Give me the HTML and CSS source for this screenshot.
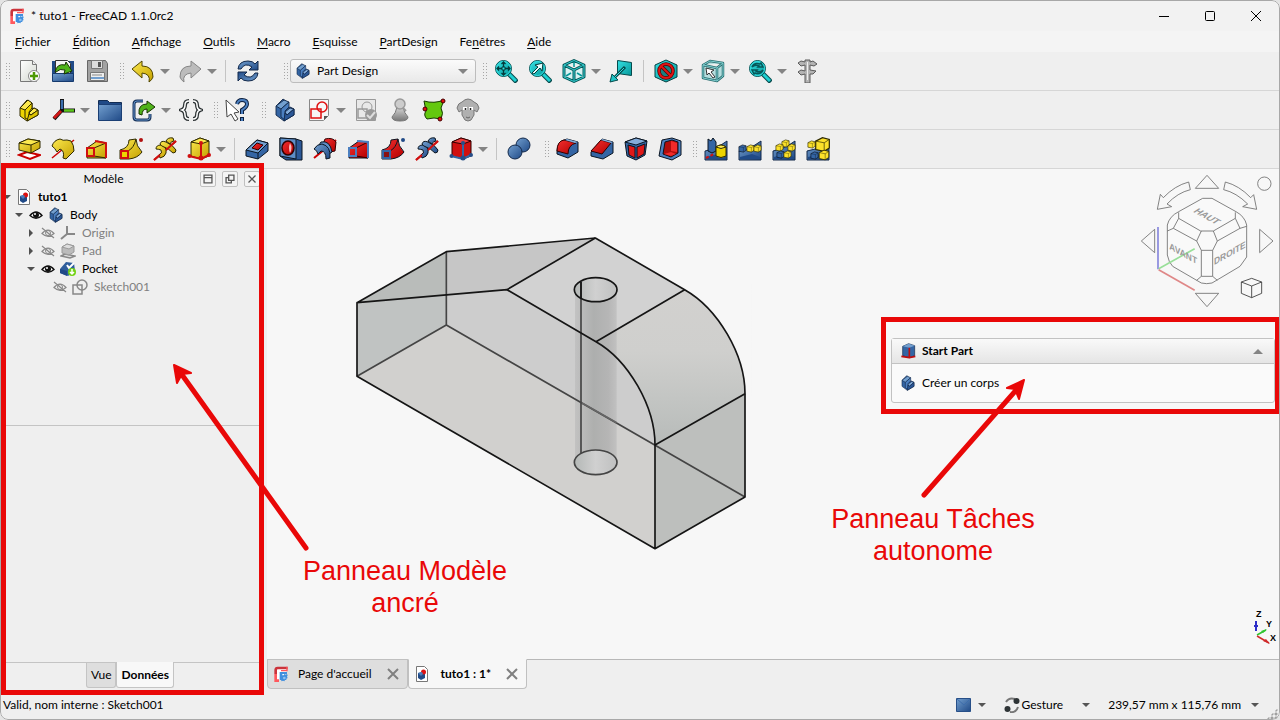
FILE: index.html
```html
<!DOCTYPE html>
<html lang="fr">
<head>
    <meta charset="UTF-8">
    <meta name="viewport" content="width=device-width, initial-scale=1.0">
    <title>* tuto1 - FreeCAD 1.1.0rc2</title>
    <link rel="stylesheet" href="styles.css">
</head>
<body>
    <!-- shared icons -->
    <svg class="defs" width="0" height="0">
        <defs>
            <linearGradient id="gb" x1="0" y1="0" x2="1" y2="1"><stop offset="0" stop-color="#729fcf"/><stop offset="1" stop-color="#204a87"/></linearGradient>
            <linearGradient id="gy" x1="0" y1="0" x2="1" y2="1"><stop offset="0" stop-color="#fce94f"/><stop offset="1" stop-color="#c4a000"/></linearGradient>
            <linearGradient id="gr" x1="0" y1="0" x2="1" y2="1"><stop offset="0" stop-color="#f23030"/><stop offset="1" stop-color="#b40000"/></linearGradient>
            <linearGradient id="gt" x1="0" y1="0" x2="1" y2="1"><stop offset="0" stop-color="#34e0e2"/><stop offset="1" stop-color="#06989a"/></linearGradient>
            <linearGradient id="gg" x1="0" y1="0" x2="0" y2="1"><stop offset="0" stop-color="#d8d8d8"/><stop offset="1" stop-color="#777"/></linearGradient>
            <linearGradient id="gp" x1="0" y1="0" x2="1" y2="1"><stop offset="0" stop-color="#fff"/><stop offset="1" stop-color="#d3d7cf"/></linearGradient>
            <linearGradient id="gf" x1="0" y1="0" x2="0" y2="1"><stop offset="0" stop-color="#d2d1cf"/><stop offset="0.4" stop-color="#cfcfcd"/><stop offset="1" stop-color="#b7bbb9"/></linearGradient>
            <linearGradient id="gc" x1="0" y1="0" x2="1" y2="0"><stop offset="0" stop-color="#bcbcbc"/><stop offset="0.45" stop-color="#9fa1a0"/><stop offset="0.8" stop-color="#aaa"/><stop offset="1" stop-color="#bbb"/></linearGradient>
            <linearGradient id="gh" x1="0" y1="0" x2="1" y2="0"><stop offset="0" stop-color="#b4b8b6"/><stop offset="0.5" stop-color="#d0d0d0"/><stop offset="1" stop-color="#bfc0c0"/></linearGradient>
        </defs>
        <symbol id="body" viewBox="0 0 24 24">
            <g stroke="#12284a" stroke-width=".9" stroke-linejoin="round">
                <path fill="#3465a4" d="M3 8v9l8 6 10-6v-6l-4-2-3 2V4l-4-3z"/>
                <path fill="#729fcf" d="M3 8l8-6 5 2-8 7z"/>
                <path fill="#4b7fc0" d="M8 11l8-7v5l-4 4v9l-4-3z"/>
                <path fill="#84addb" d="M12 14l5-4 4 1-7 6z"/>
                <path fill="#2b5796" d="M12 15l2 2 7-6v6l-10 6z"/>
            </g>
        </symbol>
        <symbol id="ybody" viewBox="0 0 24 24">
            <g stroke="#302b00" stroke-linejoin="round">
                <path fill="#edd400" d="M3 10v8l7 5 11-6v-5l-4-2-2 1V5l-5-3z"/>
                <path fill="#fce94f" d="M3 10l8-8 4 3-7 7z"/>
                <path fill="#edd400" d="M8 12l7-7v5l-3 4v8l-4-2z"/>
                <path fill="#fce94f" d="M12 15l5-5 4 2-7 5z"/>
                <path fill="#dcc300" d="M12 16l2 1 7-5v5l-11 6z"/>
            </g>
        </symbol>
        <symbol id="logo" viewBox="0 0 24 24">
            <path fill="#fff" d="M5 4h15v6l-3 3-3 8H5z"/>
            <path fill="none" stroke="#cb333b" stroke-width="4" d="M4 12V6q0-3 3-3h15"/>
            <path fill="none" stroke="#ff585d" stroke-width="4" d="M4 12v10h5"/>
            <path fill="none" stroke="#ff585d" stroke-width="2" d="M21 1v6h-9"/>
            <path fill="#418fde" d="M10 9h11v3h-7v2h2l1-2 2 1 2-1 1 2-1 2 1 2-2 1v2l-2 0-1 2-2-1-2 1-1-2h-2z"/>
            <circle cx="17" cy="18" r="2" fill="#8ec0f0"/>
        </symbol>
        <symbol id="doc" viewBox="0 0 16 16">
            <path fill="#fff" stroke="#777" d="M2.500.5h8l3 3v12h-11z"/>
            <path fill="#204a87" d="M4 7l4-1 3 2v4l-4 2-3-2z"/>
            <circle cx="9.500" cy="6" r="2.500" fill="#d11"/>
            <path fill="#4a7dbb" d="M4 7l4-1 1 2-2 2z"/>
        </symbol>
        <symbol id="eye" viewBox="0 0 16 16">
            <path fill="#fff" stroke="#111" stroke-width="1.400" d="M2 8.500Q8 1.500 14 8.500 8 14 2 8.500z"/>
            <circle cx="8" cy="8" r="3" fill="#111"/><circle cx="7" cy="7" r="1" fill="#fff"/>
        </symbol>
        <symbol id="noeye" viewBox="0 0 16 16">
            <path fill="none" stroke="#888" stroke-width="1.200" d="M2 8.500Q8 1.500 14 8.500 8 14 2 8.500zM2 3l12 10"/>
            <circle cx="8" cy="8" r="2.500" fill="none" stroke="#888"/>
        </symbol>
        <symbol id="lens" viewBox="0 0 24 24">
            <path stroke="#064a4c" stroke-width="5" d="M14 14l9 9"/><path stroke="#1fd0d2" stroke-width="3" d="M14 14l8 8"/>
            <circle cx="9.500" cy="9.500" r="8" fill="url(#gt)" stroke="#06585a"/>
            <circle cx="9.500" cy="9.500" r="7" fill="none" stroke="#34e0e2"/>
        </symbol>
        <symbol id="slope" viewBox="0 0 24 24">
            <path fill="url(#gb)" stroke="#12284a" d="M1 14l8-2 8-4 6-4v19H1z"/>
            <path fill="#204a87" d="M2 20l12-3 8 3v2H2z"/>
        </symbol>
        <symbol id="yc" viewBox="0 0 10 10">
            <path fill="#fce12a" stroke="#302b00" stroke-width=".7" d="M1 3l4-2 4 1v5L6 9 1 8z"/><path fill="none" stroke="#302b00" stroke-width=".4" d="M1 3l5 1 3-2M6 4v5"/>
        </symbol>
        <symbol id="bc" viewBox="0 0 10 10">
            <path fill="#3465a4" stroke="#0b1521" stroke-width=".7" d="M1 3l4-2 4 1v5L6 9 1 8z"/><path fill="none" stroke="#0b1521" stroke-width=".4" d="M1 3l5 1 3-2M6 4v5"/>
        </symbol>
    </svg>

    <header class="titlebar">
        <svg class="logo"><use href="#logo"/></svg>
        <h1>* tuto1 - FreeCAD 1.1.0rc2</h1>
        <div class="winbtns">
            <button aria-label="Réduire"><svg viewBox="0 0 12 12"><path d="M1 6.500h10"/></svg></button>
            <button aria-label="Agrandir"><svg viewBox="0 0 12 12"><rect x="1.500" y="1.500" width="9" height="9" rx="1"/></svg></button>
            <button aria-label="Fermer"><svg viewBox="0 0 12 12"><path d="M1 1l10 10M11 1L1 11"/></svg></button>
        </div>
    </header>

    <nav class="menubar">
        <a href="#"><u>F</u>ichier</a>
        <a href="#"><u>É</u>dition</a>
        <a href="#"><u>A</u>ffichage</a>
        <a href="#"><u>O</u>utils</a>
        <a href="#"><u>M</u>acro</a>
        <a href="#"><u>E</u>squisse</a>
        <a href="#"><u>P</u>artDesign</a>
        <a href="#">Fe<u>n</u>êtres</a>
        <a href="#"><u>A</u>ide</a>
    </nav>

    <!-- file, edit, workbench, view -->
    <div class="toolbar">
        <span class="handle"></span>
        <button class="tool" aria-label="Nouveau"><svg viewBox="0 0 24 24"><path fill="url(#gp)" stroke="#777" d="M3.500 1.500h12l4 4v17h-16z"/><path fill="#eee" stroke="#777" d="M15.500 1.500v4h4"/><circle cx="17" cy="17" r="5.500" fill="#fff" stroke="#888"/><path stroke="#4e9a06" stroke-width="2.500" d="M17 13v8M13 17h8"/></svg></button>
        <button class="tool" aria-label="Ouvrir"><svg viewBox="0 0 24 24"><path fill="#204a87" d="M1 2h22v20H1z"/><path fill="#f4f4f4" stroke="#333" d="M4.500 1.500h12l3 3v10h-15z"/><path fill="url(#gb)" stroke="#153a6e" d="M1.500 14.500h21v8h-21z"/><path fill="#4fb31a" stroke="#173300" d="M4 13q2-9 10-7l1-3 6 9-8 3 1-4q-5-2-9 2z"/></svg></button>
        <button class="tool" aria-label="Enregistrer"><svg viewBox="0 0 24 24"><path fill="#a2a2a2" stroke="#666" d="M2.500 1.500h18l2 3v18h-20z"/><path fill="#ddd" stroke="#777" d="M6.500 1.500h11v8h-11z"/><path fill="#555" d="M13 3h3v5h-3z"/><path fill="#eee" stroke="#777" d="M5.500 13.500h14v8h-14z"/><path stroke="#729fcf" stroke-width="2" d="M6 19h13"/><path stroke="#888" d="M7 16h10"/></svg></button>
        <span class="handle"></span>
        <button class="tool" aria-label="Annuler"><svg viewBox="0 0 24 24"><path fill="url(#gy)" stroke="#504500" d="M1 10l10-8v5q11 0 11 11-1 3-4 5 2-8-7-9v5z"/></svg><i class="arrow"></i></button>
        <button class="tool" aria-label="Rétablir"><svg viewBox="0 0 24 24"><path fill="#bcbcbc" stroke="#858585" d="M23 10L13 2v5Q2 7 2 18q1 3 4 5-2-8 7-9v5z"/></svg><i class="arrow"></i></button>
        <span class="sep"></span>
        <button class="tool" aria-label="Rafraîchir"><svg viewBox="0 0 24 24"><path id="rf" fill="url(#gb)" stroke="#12284a" d="M2 10q1-8 10-8 5 0 7 3l3-3v9h-9l3-3q-7-5-11 2z"/><use href="#rf" transform="rotate(180 12 12)"/></svg></button>
        <span class="handle far"></span>
        <div class="combo">
            <svg><use href="#body"/></svg>
            <select aria-label="Atelier"><option>Part Design</option></select>
            <i class="arrow"></i>
        </div>
        <span class="handle"></span>
        <button class="tool" aria-label="Tout afficher"><svg viewBox="0 0 24 24"><use href="#lens"/><path fill="none" stroke="#053a3b" stroke-width="1.300" d="M9.500 3v13M3 9.500h13M7.500 5l2-2 2 2M7.500 14l2 2 2-2M5 7.500l-2 2 2 2M14 7.500l2 2-2 2"/><path fill="#34e0e2" stroke="#053a3b" d="M8 8h3v3H8z"/></svg></button>
        <button class="tool" aria-label="Vue sélection"><svg viewBox="0 0 24 24"><use href="#lens"/><path fill="#e6ffff" stroke="#053a3b" d="M4 14l6-6-3-2 8-2-1 8-2-3-6 6z"/></svg></button>
        <button class="tool" aria-label="Vue isométrique"><svg viewBox="0 0 24 24"><path fill="#d9f3f3" stroke="#06585a" stroke-width="3" stroke-linejoin="round" d="M12 1.500l10 4.500v12l-10 4.500L2 18V6zM2 6l10 5 10-5M12 11v11"/><path fill="none" stroke="#34cfd1" stroke-linejoin="round" d="M12 1.500l10 4.500v12l-10 4.500L2 18V6zM2 6l10 5 10-5M12 11v11"/><path fill="none" stroke="#06989a" stroke-width="1.500" d="M12 3v5M4 17l5-3M20 17l-5-3"/></svg><i class="arrow"></i></button>
        <button class="tool" aria-label="Aligner"><svg viewBox="0 0 24 24"><path fill="url(#gt)" stroke="#064a4c" d="M8.500 1.500l14 2v13l-14-2z"/><path stroke="#064a4c" stroke-width="3" d="M16 8L4 20"/><path stroke="#34e0e2" d="M15 9L5 19"/><path fill="#1fc4c6" stroke="#064a4c" d="M1 23l2-8 6 6z"/></svg></button>
        <span class="sep"></span>
        <button class="tool" aria-label="Style de représentation"><svg viewBox="0 0 24 24"><path fill="url(#gt)" stroke="#063f41" d="M12 1l11 5v12l-11 5-11-5V6z"/><circle cx="12" cy="12" r="7" fill="#178183" stroke="#500" stroke-width="3.500"/><path stroke="#500" stroke-width="3.500" d="M7 7l10 10"/><circle cx="12" cy="12" r="7" fill="none" stroke="#e01414" stroke-width="2"/><path stroke="#e01414" stroke-width="2" d="M7 7l10 10"/></svg><i class="arrow"></i></button>
        <button class="tool" aria-label="Sélection"><svg viewBox="0 0 24 24"><path fill="#b5dede" stroke="#2b6e70" stroke-width="2.500" stroke-linejoin="round" d="M2 6l7-4 13 2v13l-6 5-14-3zM2 6l14 3 6-5M16 9v13"/><path fill="none" stroke="#7fcfd0" d="M2 6l7-4 13 2v13l-6 5-14-3zM2 6l14 3 6-5M16 9v13"/><path fill="#fff" stroke="#333" d="M5 9l8 2-3 2 4 5-2 1-4-5-2 2z"/></svg><i class="arrow"></i></button>
        <button class="tool" aria-label="Zoom"><svg viewBox="0 0 24 24"><use href="#lens"/><path fill="none" stroke="#06585a" stroke-width="1.500" d="M4 8q2-5 8-3l1-1 2 4h-5l1-1q-4-2-7 1zM15 11q-2 5-8 3l-1 1-2-4h5l-1 1q4 2 7-1z"/></svg><i class="arrow"></i></button>
        <button class="tool" aria-label="Mesurer"><svg viewBox="0 0 24 24"><path fill="#b4b4b4" stroke="#5a5a5a" d="M3 4l3-2 4 1V1h5v2l3-1 4 3-3 2-4-1v5l6 1-3 3h-3v9h-5v-9l-4 1-3-3 3-2 4 1V6l-4 1z"/><path stroke="#eee" d="M12.500 3v18"/></svg></button>
    </div>

    <!-- structure, help, part design helpers -->
    <div class="toolbar">
        <span class="handle first"></span>
        <button class="tool" aria-label="Créer une pièce"><svg><use href="#ybody"/></svg></button>
        <button class="tool" aria-label="Repère"><svg viewBox="0 0 24 24"><path stroke="#111" stroke-width="4" d="M11 1v13M10 12.500h14M11 12L3 21"/><path stroke="#3b6fae" stroke-width="2.500" d="M11 2v9"/><path stroke="#5cc71c" stroke-width="2.500" d="M13 12.500h10"/><path stroke="#d01818" stroke-width="3" d="M10 13l-7 7"/></svg><i class="arrow"></i></button>
        <button class="tool" aria-label="Créer un groupe"><svg viewBox="0 0 24 24"><path fill="#204a87" stroke="#122c52" d="M.5 2.500h9l2 2h12v6H.5z"/><path fill="url(#gb)" stroke="#1b3f74" d="M.5 6.500h23v16H.5z"/></svg></button>
        <button class="tool" aria-label="Créer un lien"><svg viewBox="0 0 24 24"><path fill="none" stroke="#1a355c" stroke-width="3" d="M11 3H5Q2 3 2 6v13q0 3 3 3h10q3 0 3-3v-3"/><path fill="none" stroke="#5e8fc8" d="M11 3H5Q2 3 2 6v13q0 3 3 3h10q3 0 3-3v-3"/><path fill="#4fb31a" stroke="#173300" d="M7 16q-1-10 8-10V3l8 6-8 6v-4q-5 0-5 6z"/></svg><i class="arrow"></i></button>
        <button class="tool" aria-label="VarSet"><svg viewBox="0 0 24 24"><path fill="none" stroke="#2e3436" stroke-width="4" d="M10 3Q6 3 6 7q0 4-3 5 3 1 3 5 0 4 4 4M14 3q4 0 4 4 0 4 3 5-3 1-3 5 0 4-4 4"/><path fill="none" stroke="#fff" stroke-width="1.500" d="M10 3Q6 3 6 7q0 4-3 5 3 1 3 5 0 4 4 4M14 3q4 0 4 4 0 4 3 5-3 1-3 5 0 4-4 4"/></svg></button>
        <span class="handle"></span>
        <button class="tool" aria-label="Qu'est-ce que c'est ?"><svg viewBox="0 0 24 24"><path fill="none" stroke="#0b1f3f" stroke-width="4" d="M12 6q1-4 5-4 5 0 5 4 0 3-5 6v4M17 19v4"/><path fill="none" stroke="#4b7fc0" stroke-width="2" d="M12 6q1-4 5-4 5 0 5 4 0 3-5 6v4M17 20v3"/><path fill="#fff" stroke="#444" d="M1 2l13 12-5 1 4 6-3 2-4-7-4 3z"/></svg></button>
        <span class="handle mid"></span>
        <button class="tool" aria-label="Créer un corps"><svg><use href="#body"/></svg></button>
        <button class="tool" aria-label="Créer une esquisse"><svg viewBox="0 0 24 24"><path fill="#f7f7f7" stroke="#888" d="M2.500 1.500h19v16l-5 5h-14z"/><path fill="#555" d="M17 18h4l-4 4z"/><path fill="none" stroke="#e01010" stroke-width="1.500" d="M4 11h10v9H4z"/><circle cx="15" cy="9" r="5" fill="none" stroke="#e01010" stroke-width="1.500"/></svg><i class="arrow"></i></button>
        <button class="tool" aria-label="Valider l'esquisse"><svg viewBox="0 0 24 24"><path fill="#e8e8e8" stroke="#999" d="M2.500 1.500h19v21h-19z"/><path fill="none" stroke="#999" stroke-width="1.500" d="M4 11h9v9H4z"/><circle cx="13" cy="9" r="5" fill="none" stroke="#999"/><circle cx="17" cy="17" r="6" fill="#999"/><path fill="none" stroke="#ddd" stroke-width="2" d="M13 17l3 3 5-6"/></svg></button>
        <button class="tool" aria-label="Vérifier la géométrie"><svg viewBox="0 0 24 24"><path fill="url(#gg)" stroke="#777" d="M9 9h6q1 6 5 10 0 4-8 4t-8-4q4-4 5-10z"/><circle cx="12" cy="6" r="5" fill="#ccc" stroke="#999" stroke-width="1.500"/><path stroke="#999" stroke-width="2" d="M15 10l3 3"/></svg></button>
        <button class="tool" aria-label="Forme liée"><svg viewBox="0 0 24 24"><path fill="#64c80f" stroke="#173a00" d="M2 3q10 3 20-1l-3 8q3 5 0 11-7-2-14 0-4-4-1-8z"/><g fill="#e01010" stroke="#400"><circle cx="21" cy="3" r="2"/><circle cx="3" cy="11" r="2"/><circle cx="18" cy="21" r="2"/></g></svg></button>
        <button class="tool" aria-label="Clone"><svg viewBox="0 0 24 24"><path fill="#b0b0b0" stroke="#777" d="M6 4q6-6 12 0 4 1 5 6l-2 4-3-2v5l-3 5q-3 2-6 0l-3-5v-5l-3 2-2-4q1-5 5-6z"/><path fill="#fff" d="M7 9h4v3H7zM13 9h4v3h-4z"/><path stroke="#222" stroke-width="1.500" d="M9.500 10v2M14.500 10v2"/><path fill="none" stroke="#666" d="M10 19l2 1 2-1"/></svg></button>
    </div>

    <!-- part design modelling -->
    <div class="toolbar">
        <span class="handle first"></span>
        <button class="tool" aria-label="Protrusion"><svg viewBox="0 0 24 24"><path fill="#fff" stroke="#c00" stroke-width="2" d="M2 18l8-3 13 3-10 4z"/><path fill="url(#gy)" stroke="#302b00" d="M2 6l9-4 12 2v7l-9 5-12-3z"/><path fill="#fce94f" stroke="#302b00" d="M2 6l9-4 12 2-9 4z"/><path stroke="#302b00" d="M14 8v8"/></svg></button>
        <button class="tool" aria-label="Révolution"><svg viewBox="0 0 24 24"><path stroke="#c00" stroke-width="1.500" d="M1 21L23 3"/><path fill="url(#gy)" stroke="#302b00" d="M1 9q2-6 8-7 3 2 7 1l4 1q3 4 3 10l-8 8-3-1q2-7-3-9l-3 3q-2-4-5-6z"/></svg></button>
        <button class="tool" aria-label="Lissage additif"><svg viewBox="0 0 24 24"><path fill="url(#gy)" stroke="#302b00" d="M2 11L12 4l9 2v15H2z"/><path fill="none" stroke="#302b00" d="M9 11l12-5M9 19l12 2"/><path fill="none" stroke="#d01010" stroke-width="2" d="M2 11h7v8H2zM10 4l11 2v15"/></svg></button>
        <button class="tool" aria-label="Balayage additif"><svg viewBox="0 0 24 24"><path fill="url(#gy)" stroke="#302b00" d="M1 13q9-2 9-10l7-1q0 7 6 13-4 6-13 7H1z"/><path fill="none" stroke="#302b00" d="M9 14q6-3 8-12"/><path fill="#edd400" stroke="#d01010" stroke-width="2" d="M2 14h7v7H2z"/><circle cx="22" cy="3" r="2" fill="#b01010"/></svg></button>
        <button class="tool" aria-label="Hélice additive"><svg viewBox="0 0 24 24"><path stroke="#d01010" stroke-width="2" d="M1 23L23 4"/><g fill="url(#gy)" stroke="#302b00"><path d="M3 12q0-4 5-4 6 1 5 8-1 4-6 5l-1-3q4-2 2-5-3-1-5-1z"/><path d="M7 7q1-4 6-2 7 3 10 8 0 3-3 3-5-5-9-6-3-1-4-3z"/><path d="M13 4q2-4 7-3l1 3q-3 0-4 3z"/></g><path stroke="#d01010" stroke-width="2" d="M1 23l6-5M13 13l10-9"/></svg></button>
        <button class="tool" aria-label="Primitive additive"><svg viewBox="0 0 24 24"><path fill="url(#gy)" stroke="#302b00" d="M4 5l9-4 9 3v15l-8 3-10-3z"/><path fill="#fce94f" stroke="#302b00" d="M4 5l9-4 9 3-8 3z"/><path fill="none" stroke="#d01010" stroke-width="2" d="M14 6v14M2 19l12 3 8-4"/><g fill="#d01010"><circle cx="14" cy="6" r="2"/><circle cx="2.500" cy="19" r="2"/><circle cx="14" cy="21" r="2.500"/><circle cx="22" cy="18" r="2"/></g></svg><i class="arrow"></i></button>
        <span class="sep"></span>
        <button class="tool" aria-label="Cavité"><svg viewBox="0 0 24 24"><path fill="#3465a4" stroke="#0b1521" d="M1 13L12 3l11 3v8L13 22 1 19z"/><path fill="#729fcf" stroke="#0b1521" d="M1 13L12 3l11 3-10 10z"/><path fill="url(#gr)" stroke="#300" d="M7 11l5-5 6 2-5 5z"/><path stroke="#0b1521" d="M13 16v6"/></svg></button>
        <button class="tool" aria-label="Perçage"><svg viewBox="0 0 24 24"><path fill="#2b5796" stroke="#0b1521" d="M1 1l16 1 6 2v19H7l-6-4z"/><path fill="#5e8fc8" stroke="#0b1521" d="M1 1l16 1v20L1 19z"/><ellipse cx="9" cy="11" rx="6" ry="7" fill="url(#gr)" stroke="#300" stroke-width="1.500"/><path fill="#fbb" d="M11 6q3 5 0 10-2-5 0-10z"/></svg></button>
        <button class="tool" aria-label="Rainure"><svg viewBox="0 0 24 24"><path stroke="#c00" stroke-width="2" d="M1 21L23 3"/><path fill="url(#gr)" stroke="#300" d="M12 2q8-2 11 3l-1 9-5 1-7-8z"/><path fill="#5e8fc8" stroke="#0b1521" d="M8 5q9-2 11 10l-3 2Q14 8 6 8z"/><path fill="url(#gb)" stroke="#0b1521" d="M1 12q3-5 8-5 9 2 8 14l-4 1q0-8-5-8l-3 3q-1-4-4-5z"/></svg></button>
        <button class="tool" aria-label="Lissage soustractif"><svg viewBox="0 0 24 24"><path fill="url(#gr)" stroke="#0b1521" d="M2 11L12 4l9 1v16H2z"/><path fill="none" stroke="#300" d="M9 11l12-6M9 19l12 2"/><path fill="none" stroke="#4b7fc0" stroke-width="2" d="M2 11h7v8H2zM10 4l11 1v16"/></svg></button>
        <button class="tool" aria-label="Balayage soustractif"><svg viewBox="0 0 24 24"><path fill="url(#gr)" stroke="#0b1521" d="M1 13q9-2 9-10l7-1q0 7 6 13-4 6-13 7H1z"/><path fill="none" stroke="#0b1521" d="M9 14q6-3 8-12"/><path fill="#8a1010" stroke="#3465a4" stroke-width="2" d="M2 14h7v7H2z"/><circle cx="22" cy="3" r="2" fill="#204a87"/></svg></button>
        <button class="tool" aria-label="Hélice soustractive"><svg viewBox="0 0 24 24"><path stroke="#d01010" stroke-width="2" d="M1 23L23 4"/><g fill="url(#gb)" stroke="#0b1521"><path d="M3 12q0-4 5-4 6 1 5 8-1 4-6 5l-1-3q4-2 2-5-3-1-5-1z"/><path d="M7 7q1-4 6-2 7 3 10 8 0 3-3 3-5-5-9-6-3-1-4-3z"/><path d="M13 4q2-4 7-3l1 3q-3 0-4 3z"/></g><path stroke="#d01010" stroke-width="2" d="M1 23l6-5M13 13l10-9"/></svg></button>
        <button class="tool" aria-label="Primitive soustractive"><svg viewBox="0 0 24 24"><path fill="#d01010" stroke="#300" d="M3 5l9-4 10 3v15l-8 3-11-3z"/><path fill="#ef3b3b" stroke="#300" d="M3 5l9-4 10 3-8 3z"/><path fill="none" stroke="#3465a4" stroke-width="2" d="M14 6v14M2 19l12 3 8-4"/><g fill="#274f88"><circle cx="14" cy="6" r="2"/><circle cx="2.500" cy="19" r="2"/><circle cx="14" cy="21" r="2.500"/><circle cx="22" cy="18" r="2"/></g></svg><i class="arrow"></i></button>
        <span class="sep"></span>
        <button class="tool" aria-label="Opération booléenne"><svg viewBox="0 0 24 24"><circle cx="16" cy="8" r="7" fill="url(#gb)" stroke="#12284a"/><circle cx="8" cy="15" r="7" fill="url(#gb)" stroke="#12284a"/></svg></button>
        <span class="handle near"></span>
        <button class="tool" aria-label="Congé"><svg viewBox="0 0 24 24"><path fill="#3465a4" stroke="#0b1521" d="M1 14q0-10 10-12l11 3v10l-10 6-11-4z"/><path fill="url(#gr)" stroke="#300" d="M1 14Q1 4 8 3l12 3q-8 2-8 11z"/><path fill="#84addb" d="M11 2l11 3-3 1-10-3z"/></svg></button>
        <button class="tool" aria-label="Chanfrein"><svg viewBox="0 0 24 24"><path fill="#3465a4" stroke="#0b1521" d="M1 15L12 2l11 3v11l-10 6-12-3z"/><path fill="url(#gr)" stroke="#300" d="M1 14L11 3l10 3-9 11z"/><path fill="#84addb" d="M12 2l11 3-2 1-10-3z"/></svg></button>
        <button class="tool" aria-label="Dépouille"><svg viewBox="0 0 24 24"><path fill="#3465a4" stroke="#0b1521" d="M1 5l11-4 11 3-2 14-9 5-9-4z"/><path fill="#84addb" stroke="#0b1521" d="M1 5l11-4 11 3-11 4z"/><path fill="#e01818" stroke="#0b1521" d="M4 8l7 2v11l-6-3zM13 10l8-3-1 10-7 4z"/></svg></button>
        <button class="tool" aria-label="Évidement"><svg viewBox="0 0 24 24"><path fill="#4b7fc0" stroke="#0b1521" d="M4 3l10-2 9 3v14l-9 5-13-4z"/><path fill="#b00c0c" stroke="#0b1521" d="M7 5l7-2 6 2v11l-7 4-8-3z"/><path fill="#f02a2a" d="M13 4l6 2v9l-6-1zM6 17l7-2 5 2-5 2z"/></svg></button>
        <span class="handle"></span>
        <button class="tool" aria-label="Symétrie"><svg viewBox="0 0 24 24"><use href="#slope"/><path fill="#3465a4" stroke="#0b1521" d="M4 2l3 2 2-3 3 4v9l-4 2-4-2z"/><path fill="#edd400" stroke="#302b00" d="M12 10v9q5 3 10 0v-9q-5-4-10 0z"/><path fill="#fce94f" stroke="#302b00" d="M12 10q5-4 10 0-5 3-10 0z"/><path stroke="#d01010" stroke-width="2" stroke-dasharray="3 2" d="M2 21l8-4"/></svg></button>
        <button class="tool" aria-label="Répétition linéaire"><svg viewBox="0 0 24 24"><use href="#slope"/><use href="#bc" x="0" y="7" width="9" height="9"/><use href="#yc" x="8" y="7" width="9" height="9"/><use href="#yc" x="15" y="7" width="9" height="9"/></svg></button>
        <button class="tool" aria-label="Répétition circulaire"><svg viewBox="0 0 24 24"><use href="#slope"/><use href="#yc" x="9" y="2" width="9" height="9"/><use href="#yc" x="3" y="6" width="9" height="9"/><use href="#yc" x="15" y="6" width="9" height="9"/><use href="#bc" x="4" y="13" width="9" height="9"/><use href="#yc" x="11" y="13" width="9" height="9"/></svg></button>
        <button class="tool" aria-label="Transformation multiple"><svg viewBox="0 0 24 24"><use href="#slope"/><use href="#yc" x="8" y="-1" width="17" height="17"/><use href="#yc" x="1" y="3" width="9" height="9"/><use href="#yc" x="12" y="12" width="12" height="12"/><use href="#bc" x="4" y="14" width="9" height="9"/></svg></button>
    </div>

    <main class="main">
        <aside class="dock">
            <div class="docktitle">
                <h2>Modèle</h2>
                <button aria-label="Ancrer"><svg viewBox="0 0 16 16"><path d="M3.500 3.500h9v9h-9zM3 6.500h10"/></svg></button>
                <button aria-label="Détacher"><svg viewBox="0 0 16 16"><path d="M6.500 3.500h6v6h-6zM6 6.500H3.500v6h6V10"/></svg></button>
                <button aria-label="Fermer"><svg viewBox="0 0 16 16"><path d="M4 4l8 8M12 4l-8 8"/></svg></button>
            </div>
            <ul class="tree">
                <li class="root"><i class="open"></i><svg><use href="#doc"/></svg><b>tuto1</b></li>
                <li class="lv1"><i class="open"></i><svg><use href="#eye"/></svg><svg><use href="#body"/></svg><span>Body</span></li>
                <li class="lv2 off"><i class="shut"></i><svg><use href="#noeye"/></svg><svg viewBox="0 0 16 16"><path fill="none" stroke="#888" stroke-width="2" d="M7 1v8h8M7 9l-6 5"/></svg><span>Origin</span></li>
                <li class="lv2 off"><i class="shut"></i><svg><use href="#noeye"/></svg><svg viewBox="0 0 16 16"><path fill="#ddd" stroke="#888" stroke-width="1.500" d="M1 13l4-2 10 2-5 2z"/><path fill="#bbb" stroke="#999" d="M2 4l5-3 7 2v6l-5 3-7-2z"/><path fill="#ddd" stroke="#999" d="M2 4l5-3 7 2-5 3z"/></svg><span>Pad</span></li>
                <li class="lv2"><i class="open"></i><svg><use href="#eye"/></svg><svg viewBox="0 0 16 16"><path fill="#2e5d9c" d="M0 8l6-7 8 1 1 8-7 5-8-3z"/><path fill="#204a87" d="M0 8l7 2v5l-7-3z"/><path fill="none" stroke="#fff" stroke-width="2" d="M7 4l2 3 5-5"/><circle cx="12" cy="11" r="4" fill="#73d216"/><path stroke="#fff" stroke-width="1.500" fill="none" d="M12 8v5M10 11l2 2 2-2"/></svg><span>Pocket</span></li>
                <li class="lv3 off"><i></i><svg><use href="#noeye"/></svg><svg viewBox="0 0 16 16"><path fill="none" stroke="#888" stroke-width="1.500" d="M1 6h9v9H1z"/><circle cx="10" cy="6" r="5" fill="none" stroke="#888" stroke-width="1.500"/></svg><span>Sketch001</span></li>
            </ul>
            <div class="props"></div>
            <div class="proptabs">
                <button>Vue</button>
                <button class="current">Données</button>
            </div>
            <div class="frame"></div>
        </aside>

        <section class="work">
            <div class="view">
                <svg class="model" viewBox="0 0 1290 1020">
                    <path fill="#cdcdcd" d="M51 248L319 95 766 54l268 155q100 57 181 312v310L945 986 51 469z"/>
                    <path fill="#c0c3c2" d="M51 248l268-22v89L51 469z"/>
                    <path fill="#b9bcba" d="M51 248L319 95v131z"/>
                    <path fill="#c6c6c6" d="M319 95l447-41-265 155-182 17z"/>
                    <path fill="#d2d2d2" d="M766 54l268 155-266 156-267-156z"/>
                    <path fill="#f7f7f7" d="M1034 209l200-20v340l-19-8C1215 404 1134 266 1034 209z"/>
                    <path fill="#d1d0ce" d="M51 469l268-154 626 360v311z"/>
                    <path fill="url(#gf)" d="M768 365l266-156c100 57 181 195 181 312L945 675c0-115-79-254-177-310z"/>
                    <path fill="#bdbfbd" d="M945 675l270-154v310L945 986z"/>
                    <path fill="url(#gc)" opacity=".7" d="M705 209h125v518H705z"/>
                    <ellipse cx="767" cy="209" rx="64" ry="36" fill="url(#gh)"/>
                    <ellipse cx="767" cy="727" rx="64" ry="37" fill="url(#gh)"/>
                    <g fill="none" stroke="#444" stroke-width="5">
                        <path d="M51 469l268-154V95M319 315l896 516"/>
                        <path stroke="#666" d="M722 547l108 61"/>
                        <path d="M723 185v515"/>
                        <ellipse cx="767" cy="727" rx="64" ry="37"/>
                    </g>
                    <g fill="none" stroke="#151515" stroke-width="5" stroke-linejoin="round">
                        <path d="M51 248L319 95l447-41 268 155c100 57 181 195 181 312v310L945 986 51 469V248l450-39 267 156c98 56 177 195 177 310v311"/>
                        <path d="M766 54L501 209M768 365l266-156M945 675l270-154"/>
                        <ellipse cx="767" cy="209" rx="64" ry="36"/>
                        <path d="M723 185v50"/>
                    </g>
                </svg>

                <svg class="navcube" viewBox="0 0 450 450">
                    <g fill="none" stroke="#6b6b6b" stroke-width="2.500">
                        <path fill="#f9f9f9" d="M218 100h28l72 40q26 14 32 40v96l-20 28-84 50q-16 4-32 0l-86-50q-12-12-16-34v-90q6-26 34-40z"/>
                        <path d="M146 142v18l66 38h38l66-38v-18M146 160l-16 30-18 8M316 160l14 30 20-6M130 190l70 38 14-30M330 190l-68 38-12-30M200 228l14 28h34l14-28M214 256v78M248 256v78M214 334h34l14 12M214 334l-14 12"/>
                        <path d="M231 31l35 39h-70zM231 425l35-40h-70zM34 228l40-35v70zM429 228l-40-35v70z"/>
                        <circle cx="403" cy="56" r="20"/>
                        <path d="M176 51l5 23q-38 9-70 43l14 8-43 8 9-45 9 10q34-36 76-47zM286 51l-5 23q38 9 72 43l-15 8 42 8-9-44-9 9q-34-36-76-47z"/>
                        <path stroke="#333" d="M365 340l30 11v34l-30 13-31-13v-34zM334 351l31 12 30-12M365 363v35"/>
                    </g>
                    <path stroke="#8787dd" stroke-width="5" d="M84 186v127"/>
                    <path stroke="#98df98" stroke-width="5" d="M86 311l108-60"/>
                    <path stroke="#df8787" stroke-width="5" d="M86 314l108 62"/>
                    <g class="cubetext">
                        <text transform="matrix(.9 .5 -.9 .6 188 140)">HAUT</text>
                        <text transform="matrix(.9 .5 0 1 118 252)">AVANT</text>
                        <text transform="matrix(.9 -.5 0 1 252 300)">DROITE</text>
                    </g>
                </svg>

                <div class="tasks">
                    <div class="taskbox">
                        <h3>
                            <svg viewBox="0 0 24 24"><path fill="#3465a4" stroke="#12284a" d="M4 5l9-4 9 3v15l-8 3-10-3z"/><path fill="#729fcf" d="M4 5l9-4 9 3-8 3z"/><path fill="none" stroke="#c01010" stroke-width="2.500" d="M14 7v14M2 20l12 2 9-2"/></svg>
                            <span>Start Part</span>
                            <i class="arrow up"></i>
                        </h3>
                        <a href="#"><svg><use href="#body"/></svg><span>Créer un corps</span></a>
                    </div>
                </div>

                <svg class="axes" viewBox="0 0 26 38">
                    <path stroke="#2d2dc8" stroke-width="2" d="M5 12v10M3 17h4"/>
                    <path stroke="#2fc52f" stroke-width="1.500" d="M6 26l9-5"/><path fill="#2fc52f" d="M10 22l6-2-4 4z"/>
                    <path stroke="#d02b2b" stroke-width="1.500" d="M6 27l12 7"/><path fill="#d02b2b" d="M12 32l3-2 4 5z"/>
                    <text x="5" y="8">Z</text><text x="15" y="18">Y</text><text x="19" y="32">X</text>
                </svg>
            </div>

            <div class="doctabs">
                <div class="doctab">
                    <svg class="pic"><use href="#logo"/></svg><a href="#">Page d'accueil</a>
                    <button aria-label="Fermer l'onglet"><svg viewBox="0 0 12 12"><path d="M1 1l10 10M11 1L1 11"/></svg></button>
                </div>
                <div class="doctab current">
                    <svg class="pic"><use href="#doc"/></svg><a href="#">tuto1 : 1*</a>
                    <button aria-label="Fermer l'onglet"><svg viewBox="0 0 12 12"><path d="M1 1l10 10M11 1L1 11"/></svg></button>
                </div>
            </div>
        </section>

        <p class="note dock-note">Panneau Modèle<br>ancré</p>
        <svg class="pointer dock-pointer" viewBox="0 0 140 192"><path d="M136 188L10 12"/><path class="head" d="M4 5l17 8-9 1-5 9z"/></svg>
        <p class="note task-note">Panneau Tâches<br>autonome</p>
        <svg class="pointer task-pointer" viewBox="0 0 120 125"><path d="M9 120L103 13"/><path class="head" d="M109 5l-17 8 8 1 4 10z"/></svg>
    </main>

    <footer class="status">
        <span class="msg">Valid, nom interne : Sketch001</span>
        <button class="notif" aria-label="Notifications"><svg viewBox="0 0 16 16"><path fill="url(#gb)" stroke="#274f88" d="M.5 1.500h14v13H.5z"/><path fill="none" stroke="#3d6dab" d="M1 2l7 6 6-6"/></svg><i class="arrow"></i></button>
        <button class="gesture"><svg viewBox="0 0 16 16"><path fill="none" stroke="#777" stroke-width="2" d="M2 5q3-5 9-3M6 15q6 1 8-5"/><circle cx="12.500" cy="4" r="3" fill="#2e3436"/><circle cx="3.500" cy="12" r="3" fill="#2e3436"/></svg><span>Gesture</span><i class="arrow"></i></button>
        <button class="dims"><span>239,57 mm x 115,76 mm</span><i class="arrow"></i></button>
        <i class="grip"></i>
    </footer>
</body>
</html>
```

FILE: styles.css
```css
*{
    margin: 0;
    padding: 0;
    box-sizing: border-box;
}
body{
    height: 100vh;
    display: flex;
    flex-direction: column;
    position: relative;
    overflow: hidden;
    background-color: #efefef;
    border-radius: 8px;
    color: #000;
    font: 12px/16px Lato, "Open Sans", sans-serif;
}
/* window outline */
body::after{
    content: "";
    position: absolute;
    inset: 0;
    border: 1px solid #a8a8a8;
    border-radius: 8px;
    pointer-events: none;
}
html{
    background-color: #e4e4e4;
}
button, select{
    font: inherit;
    color: inherit;
    border: 0;
    background: none;
}
a{
    color: inherit;
    text-decoration: none;
}
svg{
    flex: none;
    display: block;
}
.defs{
    position: absolute;
}
.arrow{
    flex: none;
    border: 5px solid transparent;
    border-top-color: #848484;
    border-bottom: 0;
}
.arrow.up{
    border-top: 0;
    border-bottom: 5px solid #848484;
}

/* title and menu */
.titlebar{
    height: 31px;
    flex: none;
    display: flex;
    align-items: center;
    padding: 0 1px 0 9px;
    background-color: #f2f2f2;
}
.logo{
    width: 16px;
    height: 16px;
}
.titlebar h1{
    flex: 1;
    margin-left: 6px;
    font-size: 12px;
    font-weight: normal;
}
.winbtns{
    display: flex;
}
.winbtns button{
    width: 46px;
    height: 30px;
    display: grid;
    place-items: center;
}
.winbtns svg{
    width: 12px;
    height: 12px;
    fill: none;
    stroke: #000;
}
.menubar{
    height: 21px;
    flex: none;
    display: flex;
    align-items: center;
    gap: 22px;
    padding-left: 15px;
    background-color: #f4f4f4;
}
.menubar u{
    text-underline-offset: 2px;
}

/* toolbars */
.toolbar{
    height: 39px;
    flex: none;
    display: flex;
    align-items: center;
    border-bottom: 1px solid #d6d6d6;
}
.handle{
    width: 6px;
    height: 18px;
    flex: none;
    margin: 0 1px 0 5px;
    background: radial-gradient(circle, #a6a6a6 1px, transparent 1px) 0 0 / 3px 3px;
}
.handle.near{
    margin-left: 8px;
}
.handle.mid{
    margin-left: 7px;
}
.handle.far{
    margin-left: 18px;
}
.tool{
    flex: none;
    display: flex;
    align-items: center;
}
.tool svg{
    width: 24px;
    height: 24px;
    margin: 0 5px;
}
.tool .arrow{
    margin-right: 3px;
}
.sep{
    width: 1px;
    height: 22px;
    flex: none;
    margin: 0 5px;
    background-color: #c4c4c4;
}
.combo{
    width: 186px;
    margin-right: 1px;
    position: relative;
}
.combo select{
    width: 100%;
    height: 24px;
    padding-left: 26px;
    appearance: none;
    border: 1px solid #bdbdbd;
    border-radius: 3px;
    background: linear-gradient(#fbfbfb, #e9e9e9);
}
.combo svg{
    position: absolute;
    left: 5px;
    top: 4px;
    width: 16px;
    height: 16px;
}
.combo .arrow{
    position: absolute;
    right: 8px;
    top: 10px;
}

/* model dock */
.main{
    flex: 1;
    min-height: 0;
    display: flex;
    position: relative;
}
.dock{
    width: 264px;
    flex: none;
    display: flex;
    flex-direction: column;
    padding: 0 4px 1px 5px;
    position: relative;
}
.docktitle{
    height: 19px;
    flex: none;
    display: flex;
    align-items: center;
    gap: 6px;
}
.docktitle h2{
    flex: 1;
    padding-left: 8px;
    font-size: 12px;
    font-weight: normal;
    text-align: center;
}
.docktitle button{
    width: 16px;
    height: 16px;
    border: 1px solid #c0c0c0;
    border-radius: 2px;
    background-color: #f4f4f4;
}
.docktitle svg{
    width: 14px;
    height: 14px;
    fill: none;
    stroke: #555;
    stroke-width: 1.5;
}
.tree{
    flex: 1;
    list-style: none;
    border-bottom: 1px solid #c4c4c4;
}
.tree li{
    height: 18px;
    display: flex;
    align-items: center;
    gap: 4px;
    margin-left: -3px;
}
.tree .lv1{
    padding-left: 12px;
}
.tree .lv2{
    padding-left: 24px;
}
.tree .lv3{
    padding-left: 36px;
}
.tree svg{
    width: 16px;
    height: 16px;
}
.tree span, .tree b{
    padding-left: 2px;
}
.tree i{
    width: 10px;
    display: grid;
    place-items: center;
}
.tree .open::before{
    content: "";
    border: 4px solid transparent;
    border-top-color: #505050;
    border-bottom: 0;
}
.tree .shut::before{
    content: "";
    border: 4px solid transparent;
    border-left-color: #505050;
    border-right: 0;
}
.off{
    color: #808080;
}
.props{
    flex: 1;
    border-bottom: 1px solid #c4c4c4;
}
.proptabs{
    display: flex;
    justify-content: center;
    padding-right: 5px;
}
.proptabs button{
    height: 25px;
    padding: 0 4px;
    border: 1px solid #c4c4c4;
    border-top: 0;
    border-radius: 0 0 3px 3px;
    background-color: #dedede;
}
.proptabs .current{
    margin-top: -1px;
    height: 26px;
    background-color: #f8f8f8;
    font-weight: bold;
}
.frame{
    position: absolute;
    inset: -6px 0 -6px 1px;
    border: 5px solid #e90808;
    z-index: 2;
}

/* 3d view */
.work{
    flex: 1;
    min-width: 0;
    display: flex;
    flex-direction: column;
    padding-left: 3px;
}
.view{
    flex: 1;
    position: relative;
    background-color: #f7f7f7;
    border-bottom: 1px solid #b8b8b8;
}
.model{
    position: absolute;
    left: 73px;
    top: 51px;
    width: 430px;
    height: 340px;
}
.navcube{
    position: absolute;
    right: 0;
    top: -4px;
    width: 150px;
    height: 150px;
}
.cubetext{
    fill: #999;
    font: bold 28px "Liberation Sans", sans-serif;
}
.axes{
    position: absolute;
    right: 3px;
    bottom: 12px;
    width: 26px;
    height: 38px;
    font: bold 9px "Liberation Sans", sans-serif;
}
.tasks{
    width: 399px;
    position: absolute;
    right: 0;
    top: 148px;
    padding: 16px 0 6px 5px;
    border: 5px solid #e90808;
}
.taskbox{
    border: 1px solid #c2c2c2;
    border-radius: 3px;
    background-color: #fafafa;
}
.taskbox h3{
    height: 25px;
    display: flex;
    align-items: center;
    gap: 6px;
    padding: 0 11px 0 8px;
    border-bottom: 1px solid #c2c2c2;
    background: linear-gradient(#f9f9f9, #e5e5e5);
    font-size: 12px;
}
.taskbox h3 span{
    flex: 1;
}
.taskbox svg{
    width: 16px;
    height: 16px;
}
.taskbox a{
    height: 38px;
    display: flex;
    align-items: center;
    gap: 6px;
    padding-left: 8px;
}

/* document tabs */
.doctabs{
    display: flex;
    margin-top: -1px;
    position: relative;
}
.doctab{
    height: 30px;
    display: flex;
    align-items: center;
    padding: 0 8px 0 5px;
    border: 1px solid #c0c0c0;
    border-radius: 0 0 4px 4px;
    background-color: #dedede;
}
.doctab.current{
    border-top-color: #f7f7f7;
    background-color: #f7f7f7;
    font-weight: bold;
}
.doctab a{
    margin: 0 15px 0 9px;
}
.doctab.current a{
    margin-left: 11px;
}
.doctab .pic{
    width: 16px;
    height: 16px;
}
.doctab button svg{
    width: 12px;
    height: 12px;
    stroke: #808080;
    stroke-width: 2;
}

/* red notes over the window */
.note{
    width: 240px;
    position: absolute;
    color: #e90808;
    text-align: center;
    font: 27px/32px "Liberation Sans", sans-serif;
}
.dock-note{
    left: 285px;
    top: 386px;
}
.task-note{
    right: 227px;
    top: 334px;
}
.pointer{
    position: absolute;
    z-index: 3;
    fill: none;
    stroke: #e90808;
    stroke-width: 5;
    stroke-linecap: round;
}
.pointer .head{
    fill: #e90808;
    stroke-width: 2;
    stroke-linejoin: round;
}
.dock-pointer{
    left: 170px;
    top: 191px;
    width: 140px;
    height: 192px;
}
.task-pointer{
    right: 245px;
    top: 206px;
    width: 120px;
    height: 125px;
}

/* status bar */
.status{
    height: 31px;
    flex: none;
    display: flex;
    align-items: center;
    padding: 0 2px 0 3px;
}
.msg{
    flex: 1;
}
.status button{
    display: flex;
    align-items: center;
}
.status .arrow{
    border-width: 4px;
    border-bottom: 0;
    border-top-color: #555;
}
.status svg{
    width: 16px;
    height: 16px;
}
.notif{
    gap: 6px;
    margin-right: 18px;
}
.gesture{
    gap: 2px;
    margin-right: 18px;
}
.gesture .arrow{
    margin-left: 17px;
}
.dims{
    gap: 10px;
}
.grip{
    width: 12px;
    height: 12px;
    margin-left: 7px;
    align-self: flex-end;
    background: radial-gradient(circle, #a0a0a0 1px, transparent 2px) 0 0 / 4px 4px;
    clip-path: polygon(100% 0, 100% 100%, 0 100%);
}
```
